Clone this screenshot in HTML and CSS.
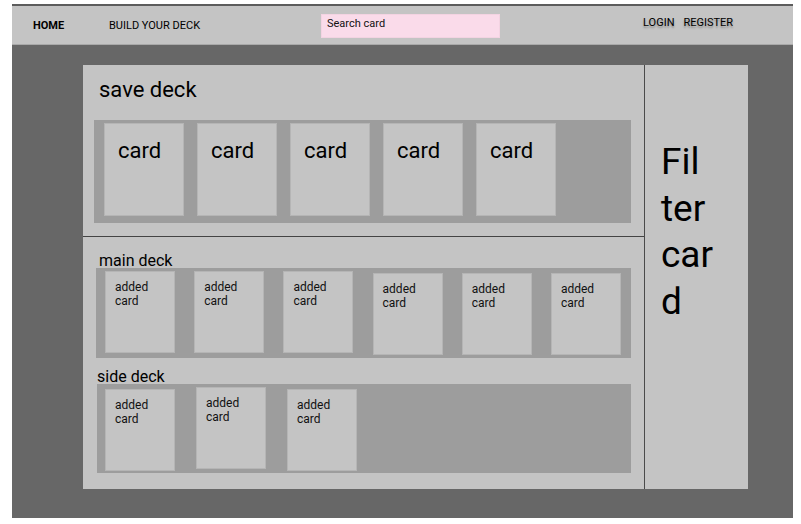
FILE: index.html
```html
<!DOCTYPE html>
<html lang="en">
<head>
    <meta charset="UTF-8">
    <meta name="viewport" content="width=device-width, initial-scale=1.0">
    <title>Build Your Deck</title>
    <link rel="stylesheet" href="styles.css">
</head>
<body>
    <div class="frame">
        <header class="topbar">
            <a href="#" class="nav-home">HOME</a>
            <a href="#" class="nav-build">BUILD YOUR DECK</a>
            <div class="search">Search card</div>
            <div class="account">
                <a href="#">LOGIN</a>
                <a href="#">REGISTER</a>
            </div>
        </header>

        <div class="stage">
            <div class="board">
                <div class="decks">
                    <section class="save-deck">
                        <h1>save deck</h1>
                        <div class="save-row">
                            <div class="card">card</div>
                            <div class="card">card</div>
                            <div class="card">card</div>
                            <div class="card">card</div>
                            <div class="card">card</div>
                        </div>
                    </section>

                    <section class="build">
                        <h2 class="main-label">main deck</h2>
                        <div class="main-row">
                            <div class="added">added<br>card</div>
                            <div class="added">added<br>card</div>
                            <div class="added">added<br>card</div>
                            <div class="added low">added<br>card</div>
                            <div class="added low">added<br>card</div>
                            <div class="added low">added<br>card</div>
                        </div>

                        <h2 class="side-label">side deck</h2>
                        <div class="side-row">
                            <div class="added">added<br>card</div>
                            <div class="added high">added<br>card</div>
                            <div class="added">added<br>card</div>
                        </div>
                    </section>
                </div>

                <aside class="filter">Fil<br>ter<br>car<br>d</aside>
            </div>
        </div>
    </div>
</body>
</html>
```

FILE: styles.css
```css
body {
    margin: 0;
    background: #fff;
    font-family: Roboto, "Liberation Sans", sans-serif;
    color: #000;
}
.frame {
    width: 781px;
    height: 512px;
    margin: 4px 0 0 12px;
    background: #676767;
    border-top: 2px solid #5c5c5c;
}
.topbar {
    display: flex;
    align-items: flex-start;
    height: 38px;
    padding-left: 21px;
    background: #c4c4c4;
    border-bottom: 1px solid #a9a9a9;
    font-size: 11px;
    line-height: 13px;
}
.topbar a {
    color: #000;
    text-decoration: none;
}
.nav-home {
    width: 76px;
    margin-top: 13px;
    font-weight: bold;
}
.nav-build {
    width: 212px;
    margin-top: 13px;
}
.search {
    width: 168px;
    height: 18px;
    margin-top: 8px;
    padding: 2px 4px 2px 5px;
    background: #fadbea;
    border: 1px solid #f3d3e2;
    line-height: 14px;
    color: #111;
}
.account {
    display: flex;
    gap: 9px;
    margin: 10px 0 0 143px;
}
.account a {
    text-shadow: 0 2px 2px rgba(0, 0, 0, 0.3);
}
.stage {
    padding: 20px 0 0 71px;
}
.board {
    display: grid;
    grid-template-columns: 562px 1fr;
    width: 665px;
    height: 424px;
    background: #c4c4c4;
}
.decks {
    border-right: 1px solid #4a4a4a;
}
.save-deck {
    height: 159px;
    padding-top: 12px;
    border-bottom: 1px solid #444;
}
.save-deck h1 {
    margin: 0 0 17px 16px;
    font-size: 22px;
    font-weight: normal;
    line-height: 26px;
}
.save-row {
    display: flex;
    gap: 13px;
    width: 527px;
    height: 100px;
    margin-left: 11px;
    padding: 3px 0 0 10px;
    background: #9d9d9d;
}
.card {
    box-sizing: border-box;
    width: 80px;
    height: 93px;
    padding: 14px 0 0 13px;
    background: #c4c4c4;
    border: 1px solid #b5b5b5;
    font-size: 22px;
    line-height: 26px;
}
.build {
    padding-top: 17px;
}
.build h2 {
    margin: 0;
    font-size: 16px;
    font-weight: normal;
    line-height: 14px;
}
.main-label {
    padding-left: 16px;
}
.side-label {
    padding-left: 14px;
    margin-top: 12px !important;
}
.main-row {
    display: flex;
    justify-content: space-between;
    align-items: flex-start;
    width: 516px;
    height: 87px;
    margin-left: 13px;
    padding: 3px 10px 0 9px;
    background: #9d9d9d;
}
.side-row {
    display: flex;
    gap: 21px;
    align-items: flex-start;
    width: 526px;
    height: 84px;
    margin-left: 14px;
    padding: 5px 0 0 8px;
    background: #9d9d9d;
}
.added {
    box-sizing: border-box;
    width: 70px;
    height: 82px;
    padding: 8px 0 0 9px;
    background: #c4c4c4;
    border: 1px solid #b5b5b5;
    font-size: 12px;
    line-height: 14px;
    color: #111;
}
.added.low {
    margin-top: 2px;
}
.added.high {
    margin-top: -2px;
}
.filter {
    padding: 74px 0 0 16px;
    font-size: 37px;
    line-height: 46.7px;
}
```
